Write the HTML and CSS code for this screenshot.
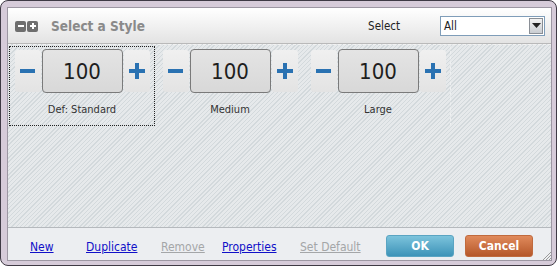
FILE: index.html
```html
<!DOCTYPE html>
<html>
<head>
<meta charset="utf-8">
<link rel="stylesheet" href="styles.css">
</head>
<body>
<div class="window">
  <div class="inner">
    <div class="header">
      <div class="toggles">
        <span class="tg"><svg width="10" height="10" viewBox="0 0 10 10"><rect x="2" y="4" width="6" height="2" fill="#fff"/></svg></span>
        <span class="tg"><svg width="10" height="10" viewBox="0 0 10 10"><rect x="2" y="4" width="6" height="2" fill="#fff"/><rect x="4" y="2" width="2" height="6" fill="#fff"/></svg></span>
      </div>
      <div class="title">Select a Style</div>
      <div class="sel-label">Select</div>
      <div class="dropdown">
        <span class="dd-text">All</span>
        <span class="dd-btn"><svg width="9" height="5" viewBox="0 0 9 5"><path d="M0 0h9L4.5 5z" fill="#222"/></svg></span>
      </div>
    </div>
    <div class="content">
      <div class="item selected">
        <div class="stepper">
          <div class="sbtn"><span class="minus"></span></div>
          <div class="num">100</div>
          <div class="sbtn"><span class="plus"></span></div>
        </div>
        <div class="label">Def: Standard</div>
      </div>
      <div class="item">
        <div class="stepper">
          <div class="sbtn"><span class="minus"></span></div>
          <div class="num">100</div>
          <div class="sbtn"><span class="plus"></span></div>
        </div>
        <div class="label">Medium</div>
      </div>
      <div class="item last">
        <div class="stepper">
          <div class="sbtn"><span class="minus"></span></div>
          <div class="num">100</div>
          <div class="sbtn"><span class="plus"></span></div>
        </div>
        <div class="label">Large</div>
      </div>
    </div>
    <div class="footer">
      <div class="links">
        <a href="#" class="lnk">New</a>
        <a href="#" class="lnk">Duplicate</a>
        <a href="#" class="lnk dis">Remove</a>
        <a href="#" class="lnk">Properties</a>
        <a href="#" class="lnk dis">Set Default</a>
      </div>
      <div class="btns">
        <div class="btn ok">OK</div>
        <div class="btn cancel">Cancel</div>
      </div>
      <svg class="grip" width="9" height="9" viewBox="0 0 9 9"><path d="M9 1L1 9M9 4L4 9M9 7L7 9" stroke="#9a9a9a" stroke-width="1"/></svg>
    </div>
  </div>
</div>
</body>
</html>
```
FILE: styles.css
```css
html, body { margin: 0; padding: 0; background: #fff; }
body { font-family: "DejaVu Sans Condensed", "DejaVu Sans", sans-serif; }
.window {
  width: 557px; height: 266px; box-sizing: border-box;
  border: 1px solid #3f3a45; border-radius: 8px;
  background: #d6cbd9; padding: 6px 4px 4px 6px;
}
.inner {
  height: 100%; box-sizing: border-box;
  border: 1px solid #9d97a3; display: flex; flex-direction: column;
  position: relative; background: #fff;
}
.header {
  height: 35px; flex: none; display: flex; align-items: center;
  background: linear-gradient(#ffffff, #e3e3e3);
  border-bottom: 1px solid #b9b9b9;
  padding-left: 7px;
}
.toggles { display: flex; gap: 1px; margin-top: 1px; }
.tg { width: 11px; height: 11px; background: #6e6e6e; border-radius: 2px; display: flex; align-items: center; justify-content: center; }
.title { font-weight: bold; font-size: 13.5px; color: #8a8a8a; margin-left: 13px; }
.sel-label { font-size: 11.5px; color: #222; margin-left: auto; }
.dropdown {
  margin-left: 40px; margin-right: 6px; width: 105px; height: 20px; box-sizing: border-box;
  border: 1px solid #7f9db9; background: #fff; display: flex; align-items: center;
}
.dd-text { font-size: 11.5px; color: #222; padding-left: 3px; flex: 1; }
.dd-btn {
  width: 14px; height: 16px; margin-right: 1px; box-sizing: border-box;
  border: 1px solid #8a8f96; background: linear-gradient(#f2f2f2, #c9cdd2);
  display: flex; align-items: center; justify-content: center;
}
.content {
  flex: 1; display: flex; align-items: flex-start; padding: 1px 0 0 1px;
  border-top: 1px dashed #f2f2f2;
  background: repeating-linear-gradient(-45deg, #d3d9dc 0 1px, #e6e9eb 1px 3px);
}
.item {
  width: 146px; height: 80px; box-sizing: border-box; margin-right: 2px;
  border: 1px dotted transparent;
  display: flex; flex-direction: column; align-items: center;
}
.item.selected { border-color: #222; }
.item.last { border-right: 1px dashed #eef0f1; }
.stepper { display: flex; align-items: center; margin-top: 2px; }
.sbtn {
  width: 26px; height: 42px; background: linear-gradient(#f0f0f0, #e3e3e3);
  border-radius: 3px; display: flex; align-items: center; justify-content: center; position: relative;
}
.minus { width: 15px; height: 4px; background: #2a72b2; display: block; }
.plus { width: 16px; height: 16px; display: block; position: relative; }
.plus::before, .plus::after { content: ""; position: absolute; background: #2a72b2; }
.plus::before { left: 0; top: 6px; width: 16px; height: 4px; }
.plus::after { left: 6px; top: 0; width: 4px; height: 16px; }
.num {
  width: 81px; height: 44px; box-sizing: border-box;
  border: 1px solid #7a7a7a; border-radius: 4px;
  background: linear-gradient(#e4e4e4, #d8d8d8);
  display: flex; align-items: center; justify-content: center;
  font-size: 22px; color: #1e1e1e; margin: 0 1px;
}
.label { font-size: 11px; color: #333; margin-top: 10px; }
.footer {
  height: 32px; flex: none; display: flex; align-items: center;
  background: #eceef1; border-top: 1px solid #b5b9bd; position: relative;
}
.links { display: grid; grid-template-columns: 56px 75px 61px 78px auto; padding-left: 22px; margin-top: 6px; }
.lnk { font-size: 12px; color: #1010c8; text-decoration: underline; }
.lnk.dis { color: #a4a6a8; }
.btns { margin-left: auto; margin-right: 18px; display: flex; gap: 11px; margin-top: 4px; }
.btn {
  width: 68px; height: 22px; border-radius: 3px; color: #fff; font-weight: bold; font-size: 12px;
  display: flex; align-items: center; justify-content: center;
}
.ok { background: linear-gradient(#7cc3dc, #3d93b8); border: 1px solid #5aa4c2; box-sizing: border-box; }
.cancel { background: linear-gradient(#e08a5c, #b5572a); border: 1px solid #c06a3e; box-sizing: border-box; }
.grip { position: absolute; right: 0; bottom: 0; }
```
